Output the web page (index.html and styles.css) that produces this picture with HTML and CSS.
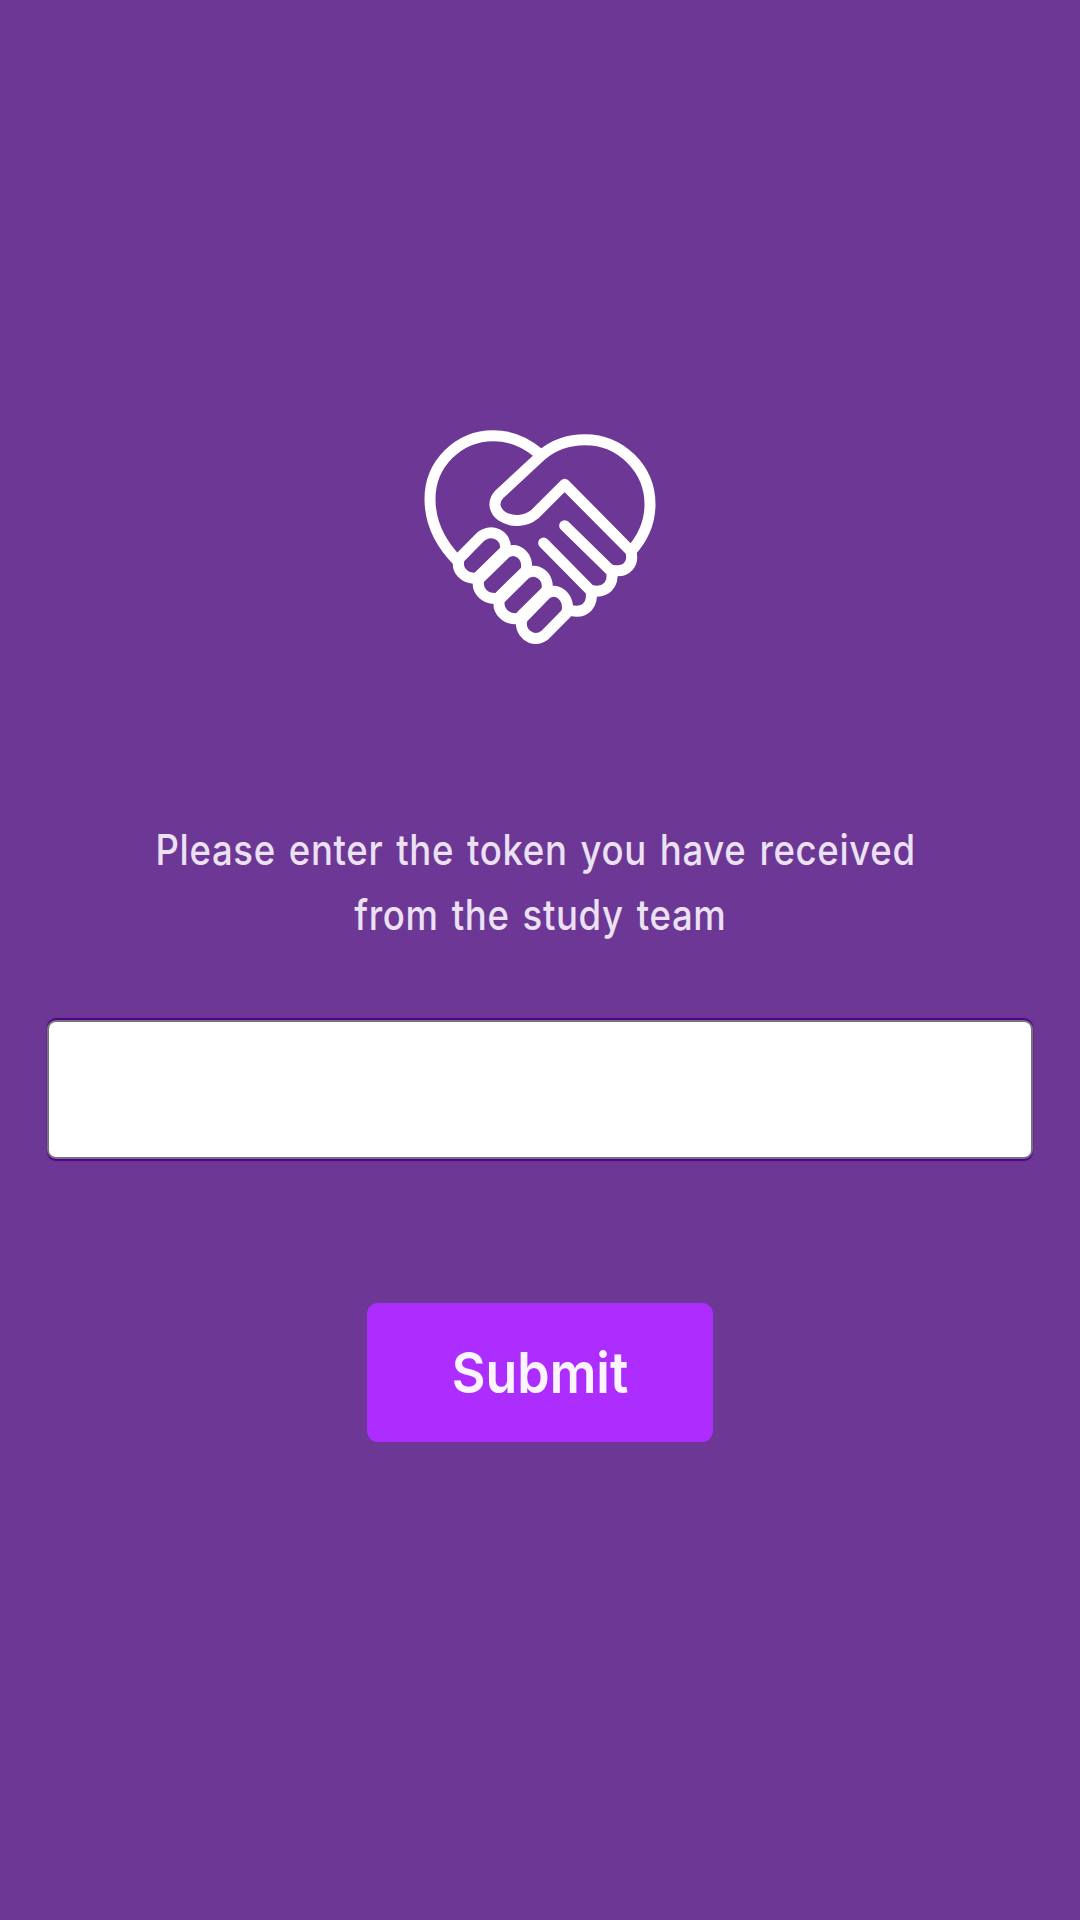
FILE: index.html
```html
<!DOCTYPE html>
<html lang="en">
<head>
<meta charset="utf-8">
<title>Enter token</title>
<link rel="stylesheet" href="styles.css">
</head>
<body>
<main class="screen">
  <svg class="logo" viewBox="0 0 780 720" aria-hidden="true">
    <path d="M385 114C345 80 300 62 250 62C145 62 60 147 60 252C60 328 98 393 145 440"/>
    <path d="M662 410C700 368 720 322 720 268C720 162 633 74 525 74C475 74 430 90 395 120L268 238C250 257 249 284 275 303C303 322 345 322 374 298L464 208L662 408C673 444 652 474 608 466"/>
    <path d="M464 332L605 470C611 507 590 535 546 527"/>
    <path d="M401 384L543 528C550 566 528 596 484 587"/>
    <path d="M148 430L208 369C240 337 290 357 287 405L200 490C164 492 136 466 148 430Z"/>
    <path d="M207 492L287 414C317 392 359 422 348 467L263 550C225 555 197 526 207 492Z"/>
    <path d="M269 553L347 476C377 455 421 483 410 527L325 611C288 615 259 586 269 553Z"/>
    <path d="M337 610L407 538C440 510 485 550 469 595L405 660C368 690 322 650 337 610Z"/>
  </svg>
  <form class="form">
    <label class="prompt" for="token"><span class="line">Please enter the token you have received</span><span class="line line-last">from the study team</span></label>
    <input class="token" id="token" type="text">
    <button class="submit" type="button"><span class="submit-text">Submit</span></button>
  </form>
</main>
</body>
</html>
```
FILE: styles.css
```css
body {
  margin: 0;
  background: #6d3796;
  font-family: Inter, "Liberation Sans", sans-serif;
}
.screen {
  box-sizing: border-box;
  height: 1920px;
  padding-top: 415px;
  display: flex;
  flex-direction: column;
  align-items: center;
}
.logo {
  width: 260px;
  height: 240px;
  fill: none;
  stroke: #fff;
  stroke-width: 33;
  stroke-linecap: round;
  stroke-linejoin: round;
}
.form {
  display: flex;
  flex-direction: column;
  align-items: center;
  width: 100%;
  padding-top: 162px;
}
.prompt {
  display: flex;
  flex-direction: column;
  align-items: center;
  font-size: 42px;
  font-weight: 500;
  line-height: 65px;
  letter-spacing: 0.75px;
  word-spacing: 3px;
  color: #ebe1f2;
  white-space: nowrap;
  transform: scaleX(0.87);
}
.line {
  padding-right: 11px;
}
.line-last {
  padding-right: 0;
}
.token {
  box-sizing: border-box;
  width: 986px;
  height: 139px;
  margin: 73px 0 0;
  padding: 0 30px;
  border: 2px solid #77737c;
  border-radius: 9px;
  background: #fff;
  box-shadow: 0 -2px 1px #53008c, 0 2px 1px #53008c;
  font: inherit;
  font-size: 48px;
  outline: 0;
}
.submit {
  width: 346px;
  height: 139px;
  margin: 144px 0 0;
  padding: 0;
  border: 0;
  border-radius: 11px;
  background: #ad2dff;
  color: #fcf4ff;
  font: 600 57px/139px Inter, "Liberation Sans", sans-serif;
}
.submit-text {
  display: block;
  transform: scaleX(0.91);
}
```
